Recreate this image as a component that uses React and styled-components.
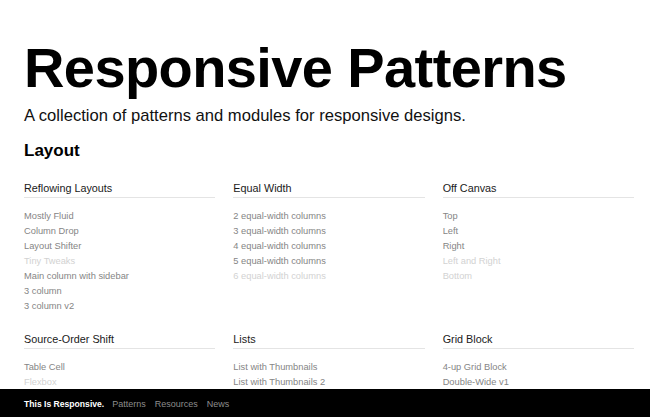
import styled, { createGlobalStyle } from "styled-components";

const GlobalStyle = createGlobalStyle`
  html, body {
    margin: 0;
    padding: 0;
    background: #fff;
    font-family: "Liberation Sans", Arial, Helvetica, sans-serif;
  }
`;

const sections = [
  {
    title: "Reflowing Layouts",
    items: [
      { label: "Mostly Fluid" },
      { label: "Column Drop" },
      { label: "Layout Shifter" },
      { label: "Tiny Tweaks", faded: true },
      { label: "Main column with sidebar" },
      { label: "3 column" },
      { label: "3 column v2" },
    ],
  },
  {
    title: "Equal Width",
    items: [
      { label: "2 equal-width columns" },
      { label: "3 equal-width columns" },
      { label: "4 equal-width columns" },
      { label: "5 equal-width columns" },
      { label: "6 equal-width columns", faded: true },
    ],
  },
  {
    title: "Off Canvas",
    items: [
      { label: "Top" },
      { label: "Left" },
      { label: "Right" },
      { label: "Left and Right", faded: true },
      { label: "Bottom", faded: true },
    ],
  },
  {
    title: "Source-Order Shift",
    items: [{ label: "Table Cell" }, { label: "Flexbox", faded: true }],
  },
  {
    title: "Lists",
    items: [{ label: "List with Thumbnails" }, { label: "List with Thumbnails 2" }],
  },
  {
    title: "Grid Block",
    items: [{ label: "4-up Grid Block" }, { label: "Double-Wide v1" }],
  },
];

function App() {
  return (
    <>
      <GlobalStyle />
      <Page>
        <Title>Responsive Patterns</Title>
        <Lead>A collection of patterns and modules for responsive designs.</Lead>
        <SectionTitle>Layout</SectionTitle>
        <Grid>
          {sections.map((s) => (
            <Group key={s.title}>
              <GroupTitle>{s.title}</GroupTitle>
              <List>
                {s.items.map((item) => (
                  <Item key={item.label} $faded={item.faded}>
                    {item.label}
                  </Item>
                ))}
              </List>
            </Group>
          ))}
        </Grid>
      </Page>
      <Footer>
        <Brand>This Is Responsive.</Brand>
        <FooterLink>Patterns</FooterLink>
        <FooterLink>Resources</FooterLink>
        <FooterLink>News</FooterLink>
      </Footer>
    </>
  );
}

const Page = styled.main`
  padding: 40px 16px 0 24px;
`;

const Title = styled.h1`
  margin: 0;
  font-size: 56px;
  line-height: 1;
  font-weight: 700;
  letter-spacing: -0.6px;
  color: #000;
`;

const Lead = styled.p`
  margin: 10px 0 0;
  font-size: 16.6px;
  line-height: 1.2;
  color: #111;
`;

const SectionTitle = styled.h2`
  margin: 15px 0 0;
  font-size: 17px;
  line-height: 1.2;
  font-weight: 700;
  color: #000;
`;

const Grid = styled.div`
  display: grid;
  grid-template-columns: repeat(3, 1fr);
  column-gap: 18px;
  row-gap: 19px;
  margin-top: 21px;
`;

const Group = styled.section`
  display: flex;
  flex-direction: column;
`;

const GroupTitle = styled.h3`
  margin: 0;
  padding-bottom: 2px;
  border-bottom: 1px solid #e4e4e4;
  font-size: 10.8px;
  line-height: 13px;
  font-weight: 400;
  color: #1a1a1a;
`;

const List = styled.ul`
  list-style: none;
  margin: 11px 0 0;
  padding: 0;
`;

const Item = styled.li`
  font-size: 9.3px;
  line-height: 15px;
  color: ${(p) => (p.$faded ? "#d2d2d2" : "#858585")};
`;

const Footer = styled.footer`
  position: fixed;
  left: 0;
  right: 0;
  bottom: 0;
  height: 28px;
  background: #000;
  display: flex;
  align-items: center;
  gap: 9px;
  padding: 1px 24px 0;
  box-sizing: border-box;
`;

const Brand = styled.span`
  font-size: 8.6px;
  font-weight: 700;
  color: #fff;
  margin-right: -1px;
`;

const FooterLink = styled.span`
  font-size: 9px;
  color: #8c8c8c;
`;

export default App;
